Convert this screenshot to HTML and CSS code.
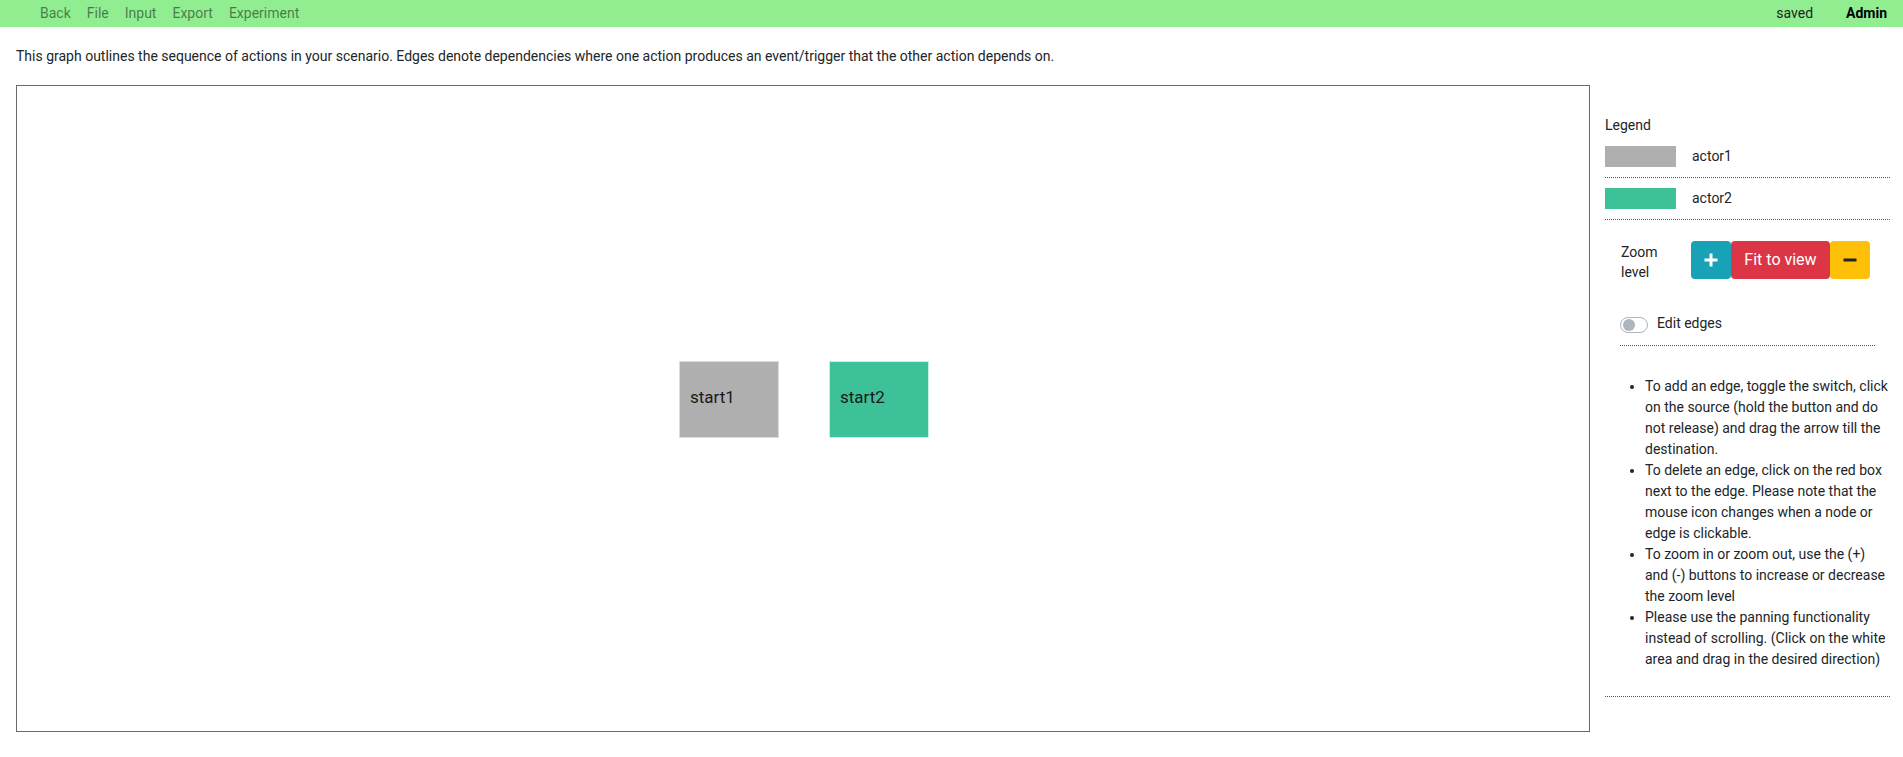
FILE: index.html
```html
<!DOCTYPE html>
<html lang="en">
<head>
<meta charset="utf-8">
<title>Scenario graph</title>
<link rel="stylesheet" href="styles.css">
</head>
<body>
<nav class="topbar">
  <div class="nav-left">
    <a class="nav-link" href="#">Back</a>
    <a class="nav-link" href="#">File</a>
    <a class="nav-link" href="#">Input</a>
    <a class="nav-link" href="#">Export</a>
    <a class="nav-link" href="#">Experiment</a>
  </div>
  <div class="nav-right">
    <span class="status">saved</span>
    <span class="user">Admin</span>
  </div>
</nav>

<p class="desc">This graph outlines the sequence of actions in your scenario. Edges denote dependencies where one action produces an event/trigger that the other action depends on.</p>

<main class="layout">
  <section class="graph">
    <div class="node actor1-bg node-a"><span>start1</span></div>
    <div class="node actor2-bg node-b"><span>start2</span></div>
  </section>

  <aside class="sidebar">
    <div class="legend-title">Legend</div>
    <div class="legend-row">
      <span class="swatch actor1-bg"></span>
      <span class="legend-label">actor1</span>
    </div>
    <div class="legend-row">
      <span class="swatch actor2-bg"></span>
      <span class="legend-label">actor2</span>
    </div>

    <div class="zoom-row">
      <div class="zoom-label">Zoom level</div>
      <div class="zoom-buttons">
        <button class="btn btn-info" type="button" aria-label="Zoom in">
          <svg width="14" height="16" viewBox="0 0 14 16"><path d="M5.5 1.5h3v5h5v3h-5v5h-3v-5h-5v-3h5z" fill="#fff"/></svg>
        </button>
        <button class="btn btn-danger" type="button">Fit to view</button>
        <button class="btn btn-warning" type="button" aria-label="Zoom out">
          <svg width="14" height="16" viewBox="0 0 14 16"><rect x="0.5" y="6.5" width="13" height="3" fill="#212529"/></svg>
        </button>
      </div>
    </div>

    <div class="switch-row">
      <span class="switch"><span class="knob"></span></span>
      <span class="switch-label">Edit edges</span>
    </div>

    <ul class="help">
      <li>To add an edge, toggle the switch, click on the source (hold the button and do not release) and drag the arrow till the destination.</li>
      <li>To delete an edge, click on the red box next to the edge. Please note that the mouse icon changes when a node or edge is clickable.</li>
      <li>To zoom in or zoom out, use the (+) and (-) buttons to increase or decrease the zoom level</li>
      <li>Please use the panning functionality instead of scrolling. (Click on the white area and drag in the desired direction)</li>
    </ul>
  </aside>
</main>
</body>
</html>
```

FILE: styles.css
```css
* { box-sizing: border-box; }

body {
  margin: 0;
  font-family: Roboto, "Liberation Sans", Arial, sans-serif;
  font-size: 14px;
  line-height: 21px;
  color: #212529;
  background: #fff;
}

.topbar {
  height: 27px;
  background: #90ee90;
  display: flex;
  align-items: center;
  justify-content: space-between;
  padding: 0 16px 0 32px;
}

.nav-left { display: flex; }

.nav-link {
  color: rgba(0, 0, 0, 0.5);
  text-decoration: none;
  padding: 0 8px;
  font-size: 14px;
}

.nav-right {
  display: flex;
  align-items: center;
  gap: 33px;
}

.status { color: #1f1f1f; }

.user {
  font-weight: 700;
  color: #000;
}

.desc {
  margin: 19px 16px 18px;
}

.layout {
  display: flex;
  align-items: flex-start;
  padding-left: 16px;
}

.graph {
  position: relative;
  width: 1574px;
  height: 647px;
  border: 1px solid #6a6a6a;
  flex: none;
}

.node {
  position: absolute;
  width: 100px;
  height: 77px;
  display: flex;
  align-items: center;
  padding-left: 10px;
  font-size: 17px;
  line-height: 20px;
  color: #1a1a1a;
}

.node span { margin-top: -5px; }

.node-a { left: 662px; top: 275px; border: 1px solid #dcdcdc; }
.node-b { left: 812px; top: 275px; border: 1px solid #c9efe2; }

.actor1-bg { background: #afafaf; }
.actor2-bg { background: #3cc199; }

.sidebar {
  width: 285px;
  margin-left: 15px;
  padding-top: 30px;
  flex: none;
}

.legend-row {
  display: flex;
  align-items: center;
  padding: 10px 0;
  border-bottom: 1px dotted #555;
}

.swatch {
  width: 71px;
  height: 21px;
  flex: none;
}

.legend-label {
  margin-left: 16px;
}

.zoom-row {
  display: flex;
  align-items: flex-start;
  margin-top: 21px;
  padding-left: 16px;
}

.zoom-label {
  width: 56px;
  padding-top: 1px;
  line-height: 20px;
  margin-right: 14px;
}

.zoom-buttons { display: flex; }

.btn {
  height: 38px;
  border: 0;
  border-radius: 4px;
  font-family: inherit;
  font-size: 16px;
  line-height: 24px;
  padding: 0;
  display: flex;
  align-items: center;
  justify-content: center;
  color: #fff;
  cursor: pointer;
}

.btn-info { background: #17a2b8; width: 40px; }
.btn-danger { background: #dc3545; width: 99px; }
.btn-warning { background: #ffc107; width: 40px; }

.switch-row {
  display: flex;
  align-items: center;
  margin: 31px 15px 0;
  padding-bottom: 11px;
  border-bottom: 1px dotted #555;
}

.switch {
  position: relative;
  width: 28px;
  height: 16px;
  border: 1px solid #adb5bd;
  border-radius: 8px;
  background: #fff;
  flex: none;
  margin-top: 2px;
}

.knob {
  position: absolute;
  left: 2px;
  top: 1px;
  width: 12px;
  height: 12px;
  border-radius: 50%;
  background: #adb5bd;
}

.switch-label { margin-left: 9px; }

.help {
  margin: 30px 0 0;
  padding: 0 0 26px 40px;
  border-bottom: 1px dotted #555;
}
```
